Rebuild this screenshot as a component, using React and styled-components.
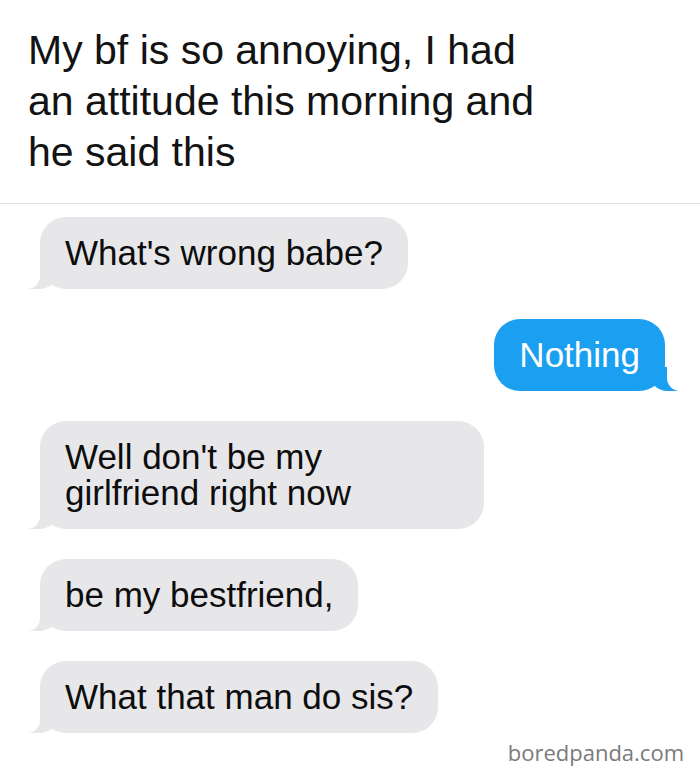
import React from 'react';
import styled, { createGlobalStyle } from 'styled-components';

const GlobalStyle = createGlobalStyle`
  html, body {
    margin: 0;
    padding: 0;
    background: #ffffff;
  }
  body {
    font-family: "Liberation Sans", Arial, sans-serif;
  }
`;

const GRAY = '#e7e7ea';
const BLUE = '#1ba0f1';

const messages = [
  { id: 1, mine: false, lines: ["What's wrong babe?"] },
  { id: 2, mine: true, lines: ['Nothing'] },
  { id: 3, mine: false, lines: ["Well don't be my", 'girlfriend right now'], extra: 108 },
  { id: 4, mine: false, lines: ['be my bestfriend,'] },
  { id: 5, mine: false, lines: ['What that man do sis?'] },
];

function App() {
  return (
    <>
      <GlobalStyle />
      <Page>
        <Title>
          My bf is so annoying, I had
          <br />
          an attitude this morning and
          <br />
          he said this
        </Title>
        <Thread>
          {messages.map((m) => (
            <Bubble key={m.id} mine={m.mine} extra={m.extra}>
              {m.lines.map((l, i) => (
                <span key={i}>
                  {l}
                  {i < m.lines.length - 1 && <br />}
                </span>
              ))}
            </Bubble>
          ))}
        </Thread>
        <Watermark>boredpanda.com</Watermark>
      </Page>
    </>
  );
}

export default App;

const Page = styled.div`
  width: 700px;
  height: 776px;
  overflow: hidden;
  display: flex;
  flex-direction: column;
  background: #fff;
`;

const Title = styled.div`
  padding: 25px 28px 25px;
  font-size: 41px;
  line-height: 51px;
  color: #131313;
  border-bottom: 1px solid #e0e0e0;
`;

const Thread = styled.div`
  display: flex;
  flex-direction: column;
  gap: 30px;
  padding: 13px 35px 0 40px;
`;

const Bubble = styled.div`
  position: relative;
  align-self: ${(p) => (p.mine ? 'flex-end' : 'flex-start')};
  padding: 18px ${(p) => 25 + (p.extra || 0)}px 18px 25px;
  font-size: 35px;
  line-height: 36px;
  border-radius: 26px;
  background: ${(p) => (p.mine ? BLUE : GRAY)};
  color: ${(p) => (p.mine ? '#ffffff' : '#0d0d0d')};

  &::before {
    content: '';
    position: absolute;
    bottom: 0;
    ${(p) => (p.mine ? 'right: -13px;' : 'left: -11px;')}
    width: 30px;
    height: 24px;
    background: ${(p) => (p.mine ? BLUE : GRAY)};
    ${(p) =>
      p.mine
        ? 'border-bottom-left-radius: 20px;'
        : 'border-bottom-right-radius: 20px;'}
  }

  &::after {
    content: '';
    position: absolute;
    bottom: 0;
    ${(p) => (p.mine ? 'right: -34px;' : 'left: -32px;')}
    width: 32px;
    height: 26px;
    background: #ffffff;
    ${(p) =>
      p.mine
        ? 'border-bottom-left-radius: 13px;'
        : 'border-bottom-right-radius: 13px;'}
  }
`;

const Watermark = styled.div`
  align-self: flex-end;
  margin-top: 4px;
  padding-right: 16px;
  font-family: "Open Sans", "DejaVu Sans", sans-serif;
  font-size: 22px;
  color: #7a7a7a;
`;
